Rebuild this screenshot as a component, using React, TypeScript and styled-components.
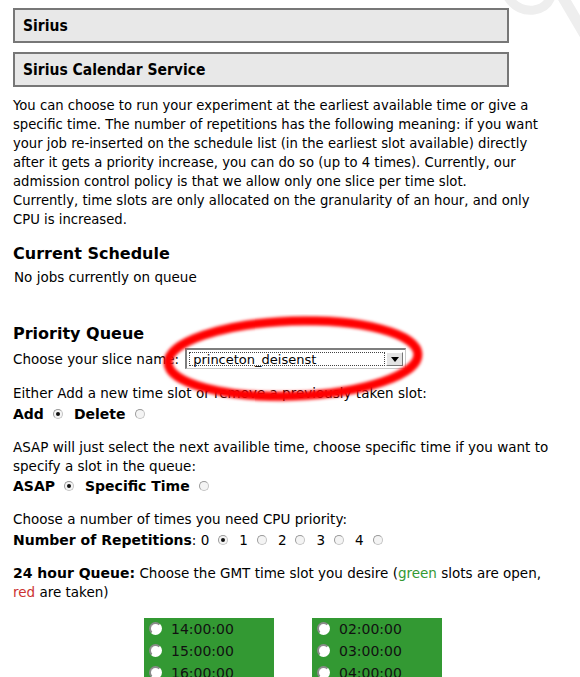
import React from 'react';
import styled, { createGlobalStyle } from 'styled-components';

const GlobalStyle = createGlobalStyle`
  html, body {
    margin: 0;
    padding: 0;
    background: #ffffff;
  }
  body {
    font-family: "DejaVu Sans", "Liberation Sans", sans-serif;
    font-size: 13.5px;
    color: #000;
  }
`;

const introLines = [
  'You can choose to run your experiment at the earliest available time or give a',
  'specific time. The number of repetitions has the following meaning: if you want',
  'your job re-inserted on the schedule list (in the earliest slot available) directly',
  'after it gets a priority increase, you can do so (up to 4 times). Currently, our',
  'admission control policy is that we allow only one slice per time slot.',
  'Currently, time slots are only allocated on the granularity of an hour, and only',
  'CPU is increased.',
];

const slotsLeft = ['14:00:00', '15:00:00', '16:00:00'];
const slotsRight = ['02:00:00', '03:00:00', '04:00:00'];

const RadioMark: React.FC<{ checked?: boolean }> = ({ checked }) => (
  <StyledRadio>{checked && <RadioDot />}</StyledRadio>
);

const App: React.FC = () => {
  return (
    <Page>
      <GlobalStyle />
      <Watermark width="100" height="50" viewBox="480 0 100 50">
        <path d="M 506 -6 Q 516 12 534 10 Q 548 8 552 -6" fill="none" stroke="#eeeeee" strokeWidth="9" />
        <path d="M 561 -6 L 588 40" fill="none" stroke="#eeeeee" strokeWidth="11" />
      </Watermark>
      <Content>
        <TitleBox>Sirius</TitleBox>
        <TitleBox>Sirius Calendar Service</TitleBox>

        <Intro>
          {introLines.map((l) => (
            <TextLine key={l}>{l}</TextLine>
          ))}
        </Intro>

        <SectionTitle $gap={15}>Current Schedule</SectionTitle>
        <Note>No jobs currently on queue</Note>

        <SectionTitle $gap={37}>Priority Queue</SectionTitle>
        <SelectRow>
          Choose your slice name:
          <SelectWrap>
            <SelectBox>
              <SelectValue>princeton_deisenst</SelectValue>
              <SelectButton>
                <svg width="8" height="5" viewBox="0 0 8 5">
                  <path d="M0 0 H8 L4 5 Z" fill="#000" />
                </svg>
              </SelectButton>
            </SelectBox>
            <Ellipse width="280" height="94" viewBox="0 0 280 94">
              <defs>
                <filter id="soft" x="-10%" y="-20%" width="120%" height="140%">
                  <feGaussianBlur stdDeviation="1.7" />
                </filter>
              </defs>
              <ellipse
                cx="138"
                cy="44.5"
                rx="125"
                ry="37.5"
                fill="none"
                stroke="#ff0000"
                strokeWidth="9"
                filter="url(#soft)"
                transform="rotate(-2 138 44.5)"
              />
            </Ellipse>
          </SelectWrap>
        </SelectRow>

        <Block $gap={15}>
          <TextLine>Either Add a new time slot or remove a previously taken slot:</TextLine>
          <Choice>
            <b>Add</b>
            <RadioMark checked />
            <b>Delete</b>
            <RadioMark />
          </Choice>
        </Block>

        <Block>
          <TextLine>
            ASAP will just select the next availible time, choose specific time if you want to
          </TextLine>
          <TextLine>specify a slot in the queue:</TextLine>
          <Choice>
            <b>ASAP</b>
            <RadioMark checked />
            <b>Specific Time</b>
            <RadioMark />
          </Choice>
        </Block>

        <Block>
          <TextLine>Choose a number of times you need CPU priority:</TextLine>
          <Choice>
            <b>Number of Repetitions</b>: 0
            <RadioMark checked />1
            <RadioMark />2
            <RadioMark />3
            <RadioMark />4
            <RadioMark />
          </Choice>
        </Block>

        <Block>
          <TextLine>
            <b>24 hour Queue:</b> Choose the GMT time slot you desire (
            <Tint $color="#339933">green</Tint> slots are open,
          </TextLine>
          <TextLine>
            <Tint $color="#cc3333">red</Tint> are taken)
          </TextLine>
        </Block>

        <SlotGrid>
          <SlotColumn>
            {slotsLeft.map((t) => (
              <SlotRow key={t}>
                <SlotRadio />
                {t}
              </SlotRow>
            ))}
          </SlotColumn>
          <SlotColumn>
            {slotsRight.map((t) => (
              <SlotRow key={t}>
                <SlotRadio />
                {t}
              </SlotRow>
            ))}
          </SlotColumn>
        </SlotGrid>
      </Content>
    </Page>
  );
};

const Page = styled.div`
  position: relative;
  width: 580px;
  height: 677px;
  overflow: hidden;
`;

const Watermark = styled.svg`
  position: absolute;
  top: 0;
  left: 480px;
`;

const Content = styled.div`
  position: relative;
  width: 560px;
  padding: 8px 0 0 13px;
`;

const TitleBox = styled.div`
  width: 484px;
  height: 31px;
  margin-bottom: 9px;
  padding-left: 8px;
  display: flex;
  align-items: center;
  background: #e8e8e8;
  border: 2px solid #777777;
  font-family: "DejaVu Sans Condensed", "DejaVu Sans", sans-serif;
  font-weight: bold;
  font-size: 15.5px;
`;

const Intro = styled.div`
  margin-top: 1px;
  font-size: 13.2px;
`;

const TextLine = styled.div`
  line-height: 19px;
  white-space: pre;

  b {
    font-weight: bold;
    font-size: 14px;
  }
`;

const SectionTitle = styled.h2<{ $gap?: number }>`
  margin: ${(p) => p.$gap ?? 13}px 0 0;
  font-size: 16px;
  line-height: 20px;
  font-weight: bold;
`;

const Note = styled.div`
  margin-top: 4px;
  padding-left: 1px;
  line-height: 19px;
`;

const SelectRow = styled.div`
  margin-top: 4px;
  display: flex;
  align-items: center;
  gap: 6px;
  height: 21px;
`;

const SelectWrap = styled.div`
  position: relative;
`;

const SelectBox = styled.div`
  width: 221px;
  height: 21px;
  box-sizing: border-box;
  display: flex;
  align-items: stretch;
  padding: 2px;
  border-top: 2px solid #7e7e7e;
  border-left: 2px solid #7e7e7e;
  border-right: 1px solid #c8c8c8;
  border-bottom: 1px solid #c8c8c8;
  background: #ffffff;
`;

const SelectValue = styled.div`
  flex: 1;
  display: flex;
  align-items: center;
  padding-left: 3px;
  border: 1px dotted #444;
  font-size: 13px;
`;

const SelectButton = styled.div`
  width: 15px;
  display: flex;
  align-items: center;
  justify-content: center;
  margin-left: 1px;
  background: #e4e4e4;
  border-right: 1px solid #777;
  border-bottom: 1px solid #777;
  border-top: 1px solid #fff;
  border-left: 1px solid #fff;
`;

const Ellipse = styled.svg`
  position: absolute;
  left: -30px;
  top: -34px;
  z-index: 2;
  pointer-events: none;
`;

const Block = styled.div<{ $gap?: number }>`
  margin-top: ${(p) => p.$gap ?? 13.5}px;
`;

const Choice = styled.div`
  display: flex;
  align-items: center;
  height: 21px;
  white-space: pre;

  b {
    font-weight: bold;
    font-size: 14px;
  }
`;

const StyledRadio = styled.span`
  position: relative;
  display: inline-block;
  box-sizing: border-box;
  width: 10px;
  height: 10px;
  margin: 0 11px 0 9px;
  border-radius: 50%;
  border: 1px solid #c4c4c4;
  border-top-color: #9a9a9a;
  border-left-color: #9a9a9a;
  background: #f4f4f4;
`;

const RadioDot = styled.span`
  position: absolute;
  left: 2px;
  top: 2px;
  width: 4px;
  height: 4px;
  border-radius: 50%;
  background: #111;
`;

const Tint = styled.span<{ $color: string }>`
  color: ${(p) => p.$color};
`;

const SlotGrid = styled.div`
  margin: 16px 0 0 131px;
  display: grid;
  grid-template-columns: 130px 130px;
  column-gap: 38px;
`;

const SlotColumn = styled.div`
  background: #339933;
  padding-bottom: 6px;
`;

const SlotRow = styled.div`
  display: flex;
  align-items: center;
  height: 22px;
  padding-left: 5px;
  font-size: 14px;
  color: #111;
`;

const SlotRadio = styled.span`
  display: inline-block;
  box-sizing: border-box;
  width: 13px;
  height: 13px;
  margin-right: 9px;
  border-radius: 50%;
  background: #ffffff;
  border: 2px solid #ffffff;
  border-top-color: #8a8a8a;
  border-left-color: #8a8a8a;
`;

export default App;
